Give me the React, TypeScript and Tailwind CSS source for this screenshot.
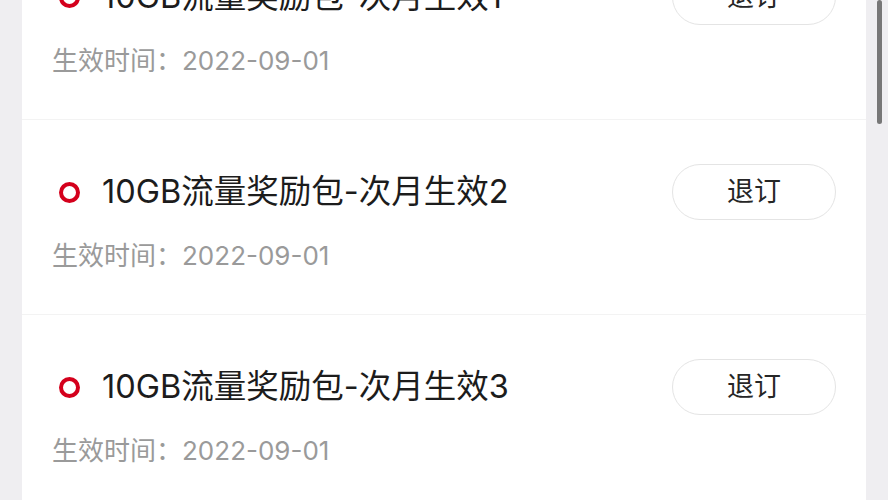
import React from "react";

const rows = [
  { name: "10GB流量奖励包-次月生效1", date: "2022-09-01" },
  { name: "10GB流量奖励包-次月生效2", date: "2022-09-01" },
  { name: "10GB流量奖励包-次月生效3", date: "2022-09-01" },
];

export default function App() {
  return (
    <div
      className="relative h-[500px] w-[888px] overflow-hidden bg-[#efeef1]"
      style={{ fontFamily: 'Inter, "Noto Sans CJK SC", sans-serif' }}
    >
      <div className="ml-[22px] mr-[22px] -mt-[75px] bg-white">
        {rows.map((r, i) => (
          <div key={i} className={i > 0 ? "border-t border-[#f3f3f3]" : ""}>
            <div className="px-[30px] pt-[44px] pb-[40px]">
              <div className="flex h-[56px] items-center justify-between">
                <div className="flex items-center">
                  <span className="ml-[7px] block h-[21px] w-[21px] rounded-full border-[4px] border-[#d4001c]" />
                  <span className="ml-[22px] text-[32.5px] leading-[40px] text-[#1c1c1c]">{r.name}</span>
                </div>
                <button className="flex h-[56px] w-[164px] items-center justify-center rounded-full border border-[#e4e4e4] bg-white text-[27px] text-[#262626]">
                  退订
                </button>
              </div>
              <div className="mt-[18px] h-[36px] text-[26px] leading-[36px] text-[#9a9a9a]">
                生效时间：{r.date}
              </div>
            </div>
          </div>
        ))}
      </div>
      <div className="absolute left-[877px] top-0 h-[124px] w-[5px] rounded-full bg-[#777777]" />
    </div>
  );
}
